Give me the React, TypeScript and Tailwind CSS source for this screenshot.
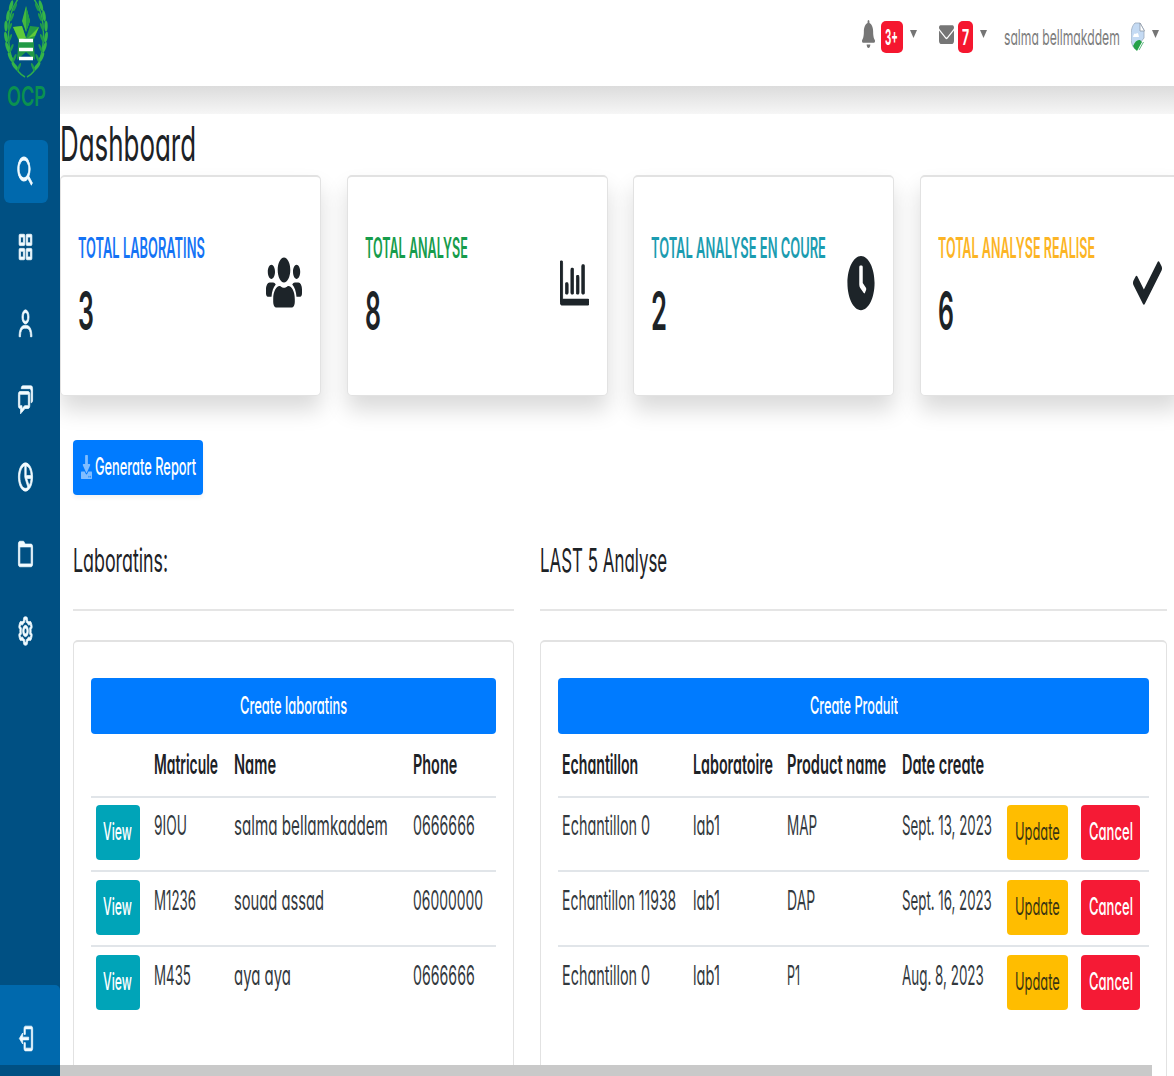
import { useLayoutEffect, useRef, useState } from "react";
import type { ReactNode } from "react";
import type { IconType } from "react-icons";
import {
  BiGridAlt,
  BiUser,
  BiChat,
  BiPieChartAlt2,
  BiFolder,
  BiCog,
  BiLogOut,
  BiSearch,
} from "react-icons/bi";
import { FaBell, FaCheck, FaClock, FaDownload, FaRegChartBar, FaUsers } from "react-icons/fa";
import { FaEnvelope } from "react-icons/fa6";

/* Condenses one line of text so that it fills the width of its box. */
function Fit({ className, children }: { className: string; children: ReactNode }) {
  const box = useRef<HTMLSpanElement>(null);
  const line = useRef<HTMLSpanElement>(null);
  const [scale, setScale] = useState(1);
  useLayoutEffect(() => {
    if (box.current && line.current) setScale(box.current.clientWidth / line.current.offsetWidth);
  }, []);
  return (
    <span ref={box} className={`block shrink-0 leading-none whitespace-nowrap ${className}`}>
      <span ref={line} className="inline-block origin-left" style={{ transform: `scaleX(${scale})` }}>
        {children}
      </span>
    </span>
  );
}

function Logo() {
  const leaves = [
    [16, 66, -38], [11.5, 57, -26], [8.5, 47, -18], [7, 37, -10], [7, 26, 0], [9, 16, 8], [12, 6, 16],
  ];
  const side = (
    <g>
      <path d="M25 77 C15 72 8.500 56 8.500 34 C8.500 18 13 5 19 -2" fill="none" stroke="#2fae4a" strokeWidth="1.4" />
      {leaves.map(([x, y, r]) => (
        <g key={y}>
          <ellipse cx={x - 1} cy={y} rx="1.7" ry="5.6" fill="#35b548" transform={`rotate(${r} ${x} ${y})`} />
          <ellipse cx={x + 3} cy={y + 1} rx="1.2" ry="4.4" fill="#1f9a4c" transform={`rotate(22 ${x + 3} ${y + 1})`} />
        </g>
      ))}
    </g>
  );
  return (
    <svg viewBox="0 0 52 80" className="block h-[80px] w-[52px]">
      {side}
      <g transform="translate(52 0) scale(-1 1)">{side}</g>
      <path d="M26 6 L30 21 L26 32 L22 21 Z" fill="#45b83f" />
      <path d="M26 6 L30 21 L26 32 Z" fill="#22a046" />
      <path d="M13 27 L22 26 L26 38 L30 26 L39 27 L33.500 40 L35 60 L26 52 L17 60 L18.500 40 Z" fill="#229a45" />
      <path d="M13 27 L22 26 L26 38 L19 40 Z M39 27 L35 36 L28 38 Z" fill="#5fca3a" />
      <path d="M19 40.500 H33 M19 49.500 H33 M19 58.500 H33" stroke="#fff" strokeWidth="3.6" />
    </svg>
  );
}

const navIcons: IconType[] = [BiGridAlt, BiUser, BiChat, BiPieChartAlt2, BiFolder, BiCog];

function Sidebar() {
  return (
    <aside className="flex h-full w-[60px] shrink-0 flex-col bg-[#005083] text-[#f1fbff]">
      <Logo />
      <div className="flex h-[60px] pt-[3px] pl-[7px]">
        <Fit className="w-[39px] text-[27px] font-semibold text-[#0b9150]">OCP</Fit>
      </div>
      <div className="ml-1 flex h-[63px] w-11 items-center justify-center rounded-[6px] bg-[#0069ad]">
        <BiSearch preserveAspectRatio="none" className="mr-px h-[36px] w-[19px] stroke-[0.7]" />
      </div>
      <nav className="flex flex-col pt-[5.500px]">
        {navIcons.map((Icon, i) => (
          <div key={i} className="flex h-[76.8px] w-[52px] items-center justify-center">
            <Icon preserveAspectRatio="none" className="mr-px h-[34px] w-[17px] stroke-[0.7]" />
          </div>
        ))}
      </nav>
      <div className="mt-auto flex h-[91px] items-start rounded-tr-[5px] bg-[#0069ad] pt-[37px] pl-[18px]">
        <BiLogOut preserveAspectRatio="none" className="h-[33px] w-[16px] stroke-[0.7]" />
      </div>
    </aside>
  );
}

function Caret({ className }: { className: string }) {
  return (
    <svg viewBox="0 0 7 8" className={`h-2 w-[7px] shrink-0 ${className}`}>
      <path d="M0 0H7L3.500 8Z" fill="#757575" />
    </svg>
  );
}

function BrokenImage() {
  return (
    <svg viewBox="0 0 14 30" className="ml-[11px] h-[30px] w-[14px] shrink-0">
      <path d="M4 1 H9 L13 8 V16 L4 27 C1 24 0 20 0 15 C0 8 1 4 4 1Z" fill="#c4daf3" stroke="#9aaabd" strokeWidth=".8" />
      <path d="M9 1 V9 H13.500Z" fill="#fff" stroke="#8e99a8" strokeWidth=".8" />
      <path d="M2 15 Q3 10 5 12 Q7 9 8 15Z" fill="#fff" />
      <path d="M2 24 Q5 17 9 18 L11 20 L6 29 Q4 28 2 24Z" fill="#26a148" />
      <path d="M12.500 20 L8 28" stroke="#5fb983" strokeWidth="1" />
    </svg>
  );
}

function TopBar() {
  return (
    <header className="flex h-[86px] shrink-0 items-start bg-white pt-[21px] pl-[802px]">
      <div className="flex h-8 items-center">
        <FaBell preserveAspectRatio="none" className="-mt-1.5 h-[28px] w-[13px] text-[#767676]" />
        <span className="ml-[5.5px] flex h-8 w-[22px] items-center justify-center rounded-[5px] bg-[#f5172f] text-white">
          <Fit className="w-[13px] text-[21px] font-bold">3+</Fit>
        </span>
        <Caret className="-mt-1.5 ml-[7px]" />
        <FaEnvelope preserveAspectRatio="none" className="-mt-1.5 ml-[22px] h-[25px] w-[15px] text-[#767676]" />
        <span className="ml-1 flex h-8 w-[15px] items-center justify-center rounded-[5px] bg-[#f5172f] text-white">
          <Fit className="w-[7px] text-[21px] font-bold">7</Fit>
        </span>
        <Caret className="-mt-1.5 ml-[7px]" />
        <Fit className="ml-[17px] w-[116px] text-[22px] font-normal text-[#7d7d7d]">salma bellmakddem</Fit>
        <BrokenImage />
        <Caret className="-mt-1.5 ml-[7px]" />
      </div>
    </header>
  );
}

type Stat = { label: string; value: string; tone: string; width: string; icon: IconType; iconSize: string };

const stats: Stat[] = [
  { label: "TOTAL LABORATINS", value: "3", tone: "text-[#1473f5]", width: "w-[127px]", icon: FaUsers, iconSize: "h-[57px] w-[36px]" },
  { label: "TOTAL ANALYSE", value: "8", tone: "text-[#169c4b]", width: "w-[103px]", icon: FaRegChartBar, iconSize: "h-[58px] w-[29px] stroke-[12]" },
  { label: "TOTAL ANALYSE EN COURE", value: "2", tone: "text-[#1b9cb0]", width: "w-[175px]", icon: FaClock, iconSize: "h-[56px] w-[28px]" },
  { label: "TOTAL ANALYSE REALISE", value: "6", tone: "text-[#fcb424]", width: "w-[157px]", icon: FaCheck, iconSize: "h-[58px] w-[29px]" },
];

function StatCard({ stat }: { stat: Stat }) {
  const Icon = stat.icon;
  return (
    <section className="flex h-[221px] w-[261px] shrink-0 justify-between rounded-[5px] border border-t-2 border-[#e2e2e2] bg-white pr-[18px] pl-[17px] shadow-[0_14px_22px_rgba(0,0,0,0.15)]">
      <div className="pt-[57px]">
        <Fit className={`${stat.width} text-[28px] font-semibold ${stat.tone}`}>{stat.label}</Fit>
        <Fit className="mt-[23px] w-[16px] text-[53px] font-semibold text-[#1d2327]">{stat.value}</Fit>
      </div>
      <div className="flex h-[211px] items-center">
        <Icon preserveAspectRatio="none" className={`text-[#1d2429] ${stat.iconSize}`} />
      </div>
    </section>
  );
}

function Btn({ className, children }: { className: string; children: ReactNode }) {
  return <button className={`flex h-[55.5px] items-center justify-center rounded-[4px] ${className}`}>{children}</button>;
}

const people = [
  { id: "9IOU", idW: "w-[33px]", name: "salma bellamkaddem", nameW: "w-[154px]", phone: "0666666", phoneW: "w-[62px]" },
  { id: "M1236", idW: "w-[42px]", name: "souad assad", nameW: "w-[90px]", phone: "06000000", phoneW: "w-[70px]" },
  { id: "M435", idW: "w-[37px]", name: "aya aya", nameW: "w-[57px]", phone: "0666666", phoneW: "w-[62px]" },
];

const samples = [
  { name: "Echantillon 0", nameW: "w-[88px]", product: "MAP", productW: "w-[30px]", date: "Sept. 13, 2023", dateW: "w-[90px]" },
  { name: "Echantillon 11938", nameW: "w-[114px]", product: "DAP", productW: "w-[28px]", date: "Sept. 16, 2023", dateW: "w-[90px]" },
  { name: "Echantillon 0", nameW: "w-[88px]", product: "P1", productW: "w-[13px]", date: "Aug. 8, 2023", dateW: "w-[82px]" },
];

const headRow = "grid h-[62px] items-center text-[27.5px] font-semibold text-[#1d2226]";
const bodyRow =
  "grid h-[75px] items-start border-t-2 border-[#e1e5e9] pt-[8px] text-[27px] font-normal text-[#33393e] nth-2:h-[74px] nth-2:pt-[7px]";
const peopleCols = "grid-cols-[63px_80px_179px_1fr]";
const sampleCols = "grid-cols-[131px_94px_115px_105px_74px_1fr] pl-1";

function PeopleTable() {
  return (
    <div>
      <div className={`${headRow} ${peopleCols}`}>
        <span />
        <Fit className="w-[64px]">Matricule</Fit>
        <Fit className="w-[42px]">Name</Fit>
        <Fit className="w-[44px]">Phone</Fit>
      </div>
      {people.map((p) => (
        <div key={p.id} className={`${bodyRow} ${peopleCols}`}>
          <Btn className="ml-[4.5px] w-[44.5px] bg-[#00a4b8]">
            <Fit className="w-[29px] text-[24px] font-medium text-white">View</Fit>
          </Btn>
          <Fit className={`mt-[7px] ${p.idW}`}>{p.id}</Fit>
          <Fit className={`mt-[7px] ${p.nameW}`}>{p.name}</Fit>
          <Fit className={`mt-[7px] ${p.phoneW}`}>{p.phone}</Fit>
        </div>
      ))}
    </div>
  );
}

function SampleTable() {
  return (
    <div>
      <div className={`${headRow} ${sampleCols}`}>
        <Fit className="w-[76px]">Echantillon</Fit>
        <Fit className="w-[80px]">Laboratoire</Fit>
        <Fit className="w-[99px]">Product name</Fit>
        <Fit className="w-[82px]">Date create</Fit>
      </div>
      {samples.map((s, i) => (
        <div key={i} className={`${bodyRow} ${sampleCols}`}>
          <Fit className={`mt-[7px] ${s.nameW}`}>{s.name}</Fit>
          <Fit className="mt-[7px] w-[27px]">lab1</Fit>
          <Fit className={`mt-[7px] ${s.productW}`}>{s.product}</Fit>
          <Fit className={`mt-[7px] ${s.dateW}`}>{s.date}</Fit>
          <Btn className="w-[61px] bg-[#ffbd00]">
            <Fit className="w-[45px] text-[24px] font-normal text-[#3b3612]">Update</Fit>
          </Btn>
          <Btn className="w-[59px] bg-[#f51a35]">
            <Fit className="w-[44px] text-[24px] font-medium text-white">Cancel</Fit>
          </Btn>
        </div>
      ))}
    </div>
  );
}

const panel = "mt-[29px] h-[460px] rounded-[5px] border border-t-2 border-[#e2e2e2] bg-white px-[17px] pt-[36px]";

export default function App() {
  return (
    <div className="relative flex h-[1076px] w-[1174px] overflow-hidden bg-white font-['Inter',sans-serif] [font-feature-settings:'cv11']">
      <Sidebar />
      <div className="flex min-w-0 flex-1 flex-col overflow-hidden">
        <TopBar />
        <div className="h-7 shrink-0 bg-linear-to-b from-[#dcdcdc] to-[#f6f6f6]" />
        <main className="shrink-0">
          <h1 className="flex h-[61px] pt-[6px]">
            <Fit className="w-[136px] text-[48px] font-normal text-[#1d2226]">Dashboard</Fit>
          </h1>
          <div className="flex gap-[25.5px]">
            {stats.map((s) => (
              <StatCard key={s.label} stat={s} />
            ))}
          </div>
          <Btn className="mt-[43.5px] ml-[13px] w-[130px] gap-[3px] bg-[#007bff] shadow-[0_3px_4px_rgba(0,0,0,0.05)]">
            <FaDownload preserveAspectRatio="none" className="h-[24px] w-[11px] text-white/50" />
            <Fit className="w-[101px] text-[24px] font-medium text-white">Generate Report</Fit>
          </Btn>
          <div className="flex gap-[26px] pt-[49px] pl-[13px]">
            <section className="w-[441px] shrink-0">
              <h2 className="flex h-[67px] border-b-2 border-[#e5e5e5]">
                <Fit className="w-[95px] text-[33px] font-normal text-[#1d2226]">Laboratins:</Fit>
              </h2>
              <div className={panel}>
                <Btn className="w-full bg-[#007bff]">
                  <Fit className="w-[107px] text-[24px] font-medium text-white">Create laboratins</Fit>
                </Btn>
                <PeopleTable />
              </div>
            </section>
            <section className="w-[627px] shrink-0">
              <h2 className="flex h-[67px] border-b-2 border-[#e5e5e5]">
                <Fit className="w-[127px] text-[33px] font-normal text-[#1d2226]">LAST 5 Analyse</Fit>
              </h2>
              <div className={panel}>
                <Btn className="w-full bg-[#007bff]">
                  <Fit className="w-[88px] text-[24px] font-medium text-white">Create Produit</Fit>
                </Btn>
                <SampleTable />
              </div>
            </section>
          </div>
        </main>
      </div>
      <div className="absolute bottom-0 left-0 flex h-[11px] w-[1152px]">
        <div className="w-[60px] bg-[#005083]" />
        <div className="flex-1 bg-[#c9c9c9]" />
      </div>
    </div>
  );
}
